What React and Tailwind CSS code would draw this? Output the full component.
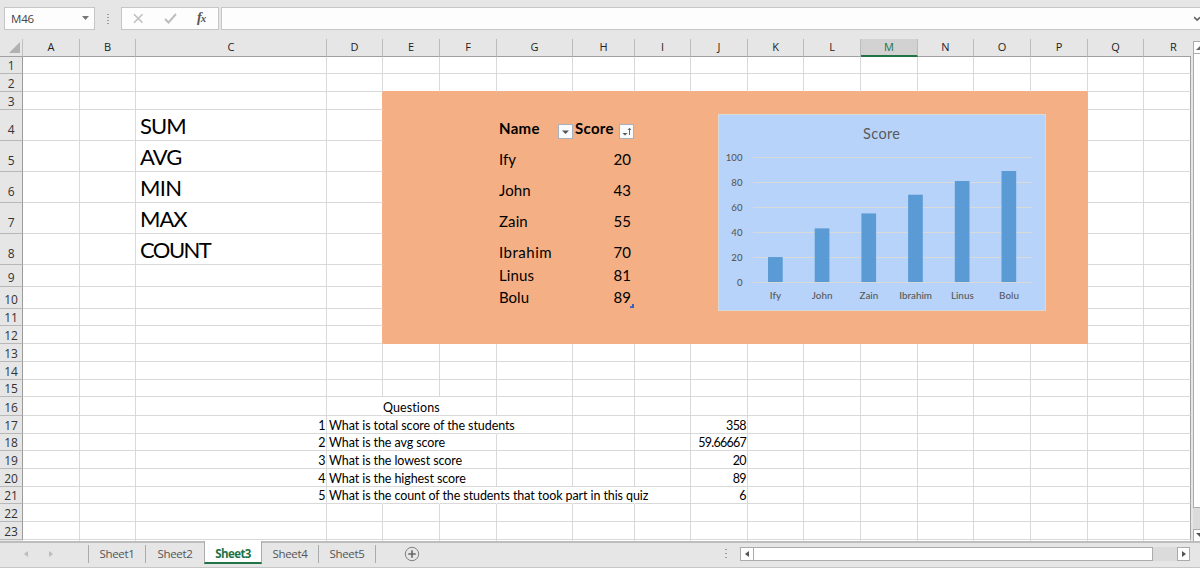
import React from "react";

const columns = [
  ["A", 57], ["B", 56], ["C", 191], ["D", 56], ["E", 57], ["F", 57], ["G", 76], ["H", 62], ["I", 56],
  ["J", 57], ["K", 56], ["L", 57], ["M", 57], ["N", 56], ["O", 57], ["P", 57], ["Q", 56], ["R", 47],
];

const rowHeights = [17, 18, 18, 31, 31, 31, 31, 31, 22, 22, 17, 18, 18, 18, 17, 19, 18, 17, 18, 18, 17, 18, 18];

const fn = "pl-[4px] text-[22px] leading-[28px]";
const name = "pl-[2px] text-[15px] leading-[20px]";
const num = "justify-end pr-[3px] text-[15px] leading-[20px]";
const q = "pl-[2px] text-[12.5px] leading-[14px] tracking-[-0.09px]";
const n = "justify-end pr-[1px] text-[12.5px] leading-[14px] tracking-[-0.6px]";

const cells = {
  C4: ["SUM", fn + " tracking-[-0.9px]"],
  C5: ["AVG", fn + " tracking-[-0.9px]"],
  C6: ["MIN", fn + " tracking-[-0.7px]"],
  C7: ["MAX", fn + " tracking-[-1px]"],
  C8: ["COUNT", fn + " tracking-[-1.55px]"],
  G4: ["Name", name + " font-bold pb-[2px] tracking-[0.3px]"],
  H4: ["Score", name + " font-bold pb-[2px] tracking-[0.3px]"],
  G5: ["Ify", name + " pb-[2px]"],
  G6: ["John", name + " pb-[2px] tracking-[0.1px]"],
  G7: ["Zain", name + " pb-[2px] tracking-[0.1px]"],
  G8: ["Ibrahim", name + " pb-[2px] tracking-[0.5px]"],
  G9: ["Linus", name + " pb-[1px] tracking-[0.1px]"],
  G10: ["Bolu", name + " pb-[1px]"],
  H5: ["20", num + " pb-[2px]"], H6: ["43", num + " pb-[2px]"], H7: ["55", num + " pb-[2px]"],
  H8: ["70", num + " pb-[2px]"], H9: ["81", num + " pb-[1px]"], H10: ["89", num + " pb-[1px]"],
  E16: ["Questions", "text-[12.5px] leading-[14px] tracking-[0.1px]"],
  C17: ["1", n], C18: ["2", n], C19: ["3", n], C20: ["4", n], C21: ["5", n],
  D17: ["What is total score of the students", q],
  D18: ["What is the avg score", q],
  D19: ["What is the lowest score", q],
  D20: ["What is the highest score", q],
  D21: ["What is the count of the students that took part in this quiz", q],
  J17: ["358", n], J18: ["59.66667", n + " tracking-[-0.75px]"], J19: ["20", n], J20: ["89", n], J21: ["6", n],
};

// Cells whose right grid line is covered by overflowing text.
const open = new Set([
  "D16", "E16", "D17", "E17", "F17", "D18", "E18", "D19", "E19", "D20", "E20",
  "D21", "E21", "F21", "G21", "H21",
]);

function FilterButton({ sorted }) {
  return (
    <span className="flex h-[15px] w-[15px] shrink-0 border border-[#a6b1bd] bg-[#f8fafc]">
      <svg width="13" height="13" viewBox="0 0 13 13">
        {sorted ? (
          <>
            <path d="M2.500 8h5L5 10.500z" fill="#555" />
            <path d="M9.500 10V3.500M8 5l1.500-1.800L11 5" stroke="#666" fill="none" strokeWidth="1" />
          </>
        ) : (
          <path d="M3 5.500h7L6.500 9z" fill="#555" />
        )}
      </svg>
    </span>
  );
}

function Cell({ col, width, row }) {
  const id = col + row;
  const c = cells[id];
  const i = col.charCodeAt(0) - 65;
  const filled = i >= 4 && i <= 15 && row >= 3 && row <= 12;
  const right = filled || (col === "D" && row >= 3 && row <= 12)
    ? "border-r-[#f4af84]"
    : open.has(id) ? "border-r-transparent" : col === "R" ? "border-r-[#a0a0a0]" : "border-r-[#d9d9d9]";
  const bottom = filled || (row === 2 && i >= 4 && i <= 15) ? "border-b-[#f4af84]" : "border-b-[#d9d9d9]";
  return (
    <div
      className={`relative flex shrink-0 items-end whitespace-nowrap border-b border-r ${right} ${bottom} ${filled ? "bg-[#f4af84]" : ""} ${c ? c[1] : ""}`}
      style={{ width }}
    >
      {c && <span>{c[0]}</span>}
      {id === "G4" && <span className="absolute -right-px bottom-px z-10"><FilterButton /></span>}
      {id === "H4" && <span className="absolute bottom-px right-0"><FilterButton sorted /></span>}
      {id === "H10" && (
        <svg className="absolute bottom-0 right-0" width="4" height="4"><path d="M4 0v4H0V2.300H2V0z" fill="#3b5fc0" /></svg>
      )}
    </div>
  );
}

const scores = [["Ify", 20], ["John", 43], ["Zain", 55], ["Ibrahim", 70], ["Linus", 81], ["Bolu", 89]];

function ScoreChart() {
  const zero = 168;
  const unit = 1.247;
  return (
    <svg className="block" width="328" height="197" viewBox="0 0 328 197" fontFamily="Lato, sans-serif" fill="#595959">
      <rect x="0.500" y="0.500" width="327" height="196" fill="#b7d3fa" stroke="#d9d9d9" />
      <text x="163.500" y="25" fontSize="14.500" textAnchor="middle" textLength="37">Score</text>
      {[0, 20, 40, 60, 80, 100].map((v) => (
        <g key={v}>
          <rect x="35" y={Math.round(zero - v * unit)} width="279" height="1" fill="#d9d9d9" />
          <text x="24.500" y={zero - v * unit + 3.500} fontSize="9.600" fontWeight="500" textAnchor="end">{v}</text>
        </g>
      ))}
      {scores.map(([label, v], i) => (
        <g key={label}>
          <rect x={50 + i * 46.700} y={zero - v * unit} width="14.700" height={v * unit} fill="#5b9bd5" />
          <text x={57.500 + i * 46.700} y="185" fontSize="9.900" fontWeight="500" textAnchor="middle">{label}</text>
        </g>
      ))}
    </svg>
  );
}

function FormulaBar() {
  return (
    <div className="flex h-[39px] shrink-0 items-start pl-[4px] pt-[7px]">
      <div className="flex h-[23px] w-[91px] items-center justify-between border border-[#c6c6c6] bg-[#fdfdfd] pl-[6px] pr-[5px] text-[11.5px] tracking-[-0.2px] text-[#444]">
        <span>M46</span>
        <svg className="-mt-[2px]" width="7" height="4"><path d="M0 0h7L3.500 4z" fill="#777" /></svg>
      </div>
      <svg className="ml-[11px] mt-[6px]" width="4" height="12">
        <path d="M1 1h2v1H1zM1 4h2v1H1zM1 7h2v1H1zM1 10h2v1H1z" fill="#a0a0a0" />
      </svg>
      <div className="ml-[11px] flex h-[23px] w-[98px] items-center border border-[#c6c6c6] bg-[#fdfdfd]">
        <svg className="ml-[11px]" width="11" height="11"><path d="M1 1.300l8.500 8.400M9.500 1.300L1 9.700" stroke="#bdbdbd" strokeWidth="1.500" /></svg>
        <svg className="ml-[20px]" width="13" height="11"><path d="M1 6l3.500 3.500L12 1" fill="none" stroke="#bdbdbd" strokeWidth="1.900" /></svg>
        <span className="-mt-[2px] ml-[20px] flex items-baseline font-['Liberation_Serif',serif] text-[14px] font-bold italic leading-none text-[#555]">f<span className="-ml-px text-[11px]">x</span></span>
      </div>
      <div className="ml-[2px] flex h-[23px] flex-1 items-center justify-end border border-r-0 border-[#c6c6c6] bg-[#fdfdfd]">
        <svg width="6" height="6"><path d="M0 1l3.200 3L6 1.300" fill="none" stroke="#666" strokeWidth="1.700" /></svg>
      </div>
    </div>
  );
}

function ColumnHeaders() {
  return (
    <div className="flex h-[18px] shrink-0 text-[11px] leading-[16px] text-[#222]">
      <div className="flex w-[23px] items-end justify-end border-b border-r border-b-[#a0a0a0] border-r-[#c0c0c0] pb-[3px] pr-[2px]">
        <svg width="11" height="11"><path d="M11 0v11H0z" fill="#b1b1b1" /></svg>
      </div>
      {columns.map(([c, w]) => (
        <div
          key={c}
          className={`shrink-0 border-b text-center ${c === "R" ? "pl-[12px]" : "border-r border-r-[#bcbcbc]"} ${c === "M" ? "border-b-2 border-b-[#217346] bg-[#d2d2d2] text-[#217346]" : "border-b-[#a0a0a0]"}`}
          style={{ width: w }}
        >
          {c}
        </div>
      ))}
    </div>
  );
}

function Sheet() {
  return (
    <div className="relative h-[484px] w-[1191px] shrink-0 overflow-hidden bg-white [font-variant-ligatures:none]">
      {rowHeights.map((h, i) => (
        <div key={i} className="flex" style={{ height: h }}>
          <div className={`flex w-[23px] shrink-0 items-end justify-center border-b border-r border-b-[#b8b8b8] border-r-[#9b9b9b] bg-[#e6e6e6] font-['Open_Sans',sans-serif] text-[12px] leading-[15px] tracking-[-0.2px] text-[#333] ${h === 31 ? "pb-[3px]" : h === 22 ? "pb-[1px]" : ""}`}>
            {i + 1}
          </div>
          {columns.map(([c, w]) => <Cell key={c} col={c} width={w} row={i + 1} />)}
        </div>
      ))}
      <div className="flex h-[2px]">
        <div className="w-[23px] shrink-0 bg-[#e6e6e6]" />
        {columns.map(([c, w]) => <div key={c} className="shrink-0 border-r border-[#d9d9d9]" style={{ width: w }} />)}
      </div>
      <div className="absolute left-[718px] top-[57px]"><ScoreChart /></div>
    </div>
  );
}

function VerticalScrollbar() {
  return (
    <div className="ml-[2px] mt-[2px] flex h-[501px] w-[7px] flex-col overflow-hidden bg-[#dbdbdb]">
      <div className="flex h-[13px] items-center border border-r-0 border-[#ababab] bg-white pl-[2px]">
        <svg width="5" height="5"><path d="M0 5l4-4 1 1v3z" fill="#666" /></svg>
      </div>
      <div className="h-[454px] border border-r-0 border-t-0 border-[#ababab] bg-white" />
      <div className="mt-auto flex h-[13px] items-center border border-r-0 border-[#ababab] bg-white pl-[2px]">
        <svg width="5" height="5"><path d="M0 0h5v3L4 4z" fill="#555" /></svg>
      </div>
    </div>
  );
}

function SheetTabs() {
  const tabs = [["Sheet1", 57], ["Sheet2", 58], ["Sheet3", 58], ["Sheet4", 57], ["Sheet5", 57]];
  return (
    <div className="flex h-[27px] shrink-0 items-start border-b border-t-2 border-b-[#c6c6c6] border-t-[#bdbdbd]">
      <div className="flex w-[88px] shrink-0 items-center gap-[21px] pl-[24px] pt-[8px]">
        <svg width="4" height="6"><path d="M4 0v6L0 3z" fill="#bcbcbc" /></svg>
        <svg width="4" height="6"><path d="M0 0v6l4-3z" fill="#bcbcbc" /></svg>
      </div>
      <div className="mt-[2px] h-[18px] w-px bg-[#ababab]" />
      {tabs.map(([t, w]) =>
        t === "Sheet3" ? (
          <div key={t} className="-mt-[2px] h-[23px] shrink-0 border-x border-b-2 border-x-[#ababab] border-b-[#217346] bg-white pt-[3px] text-center text-[11.5px] font-bold leading-[19px] tracking-[-0.55px] text-[#217346]" style={{ width: w }}>
            {t}
          </div>
        ) : (
          <div key={t} className={`mt-[2px] h-[18px] shrink-0 text-center text-[11.5px] leading-[17px] tracking-[-0.35px] text-[#555] ${t === "Sheet2" ? "" : "border-r border-[#ababab]"}`} style={{ width: w }}>
            {t}
          </div>
        )
      )}
      <svg className="ml-[28px] mt-[3px]" width="16" height="16">
        <circle cx="8" cy="8" r="6.700" fill="none" stroke="#808080" />
        <path d="M8 4.300v7.400M4.300 8h7.400" stroke="#666" strokeWidth="1.600" />
      </svg>
      <div className="flex-1" />
      <svg className="mr-[12px] mt-[5px]" width="4" height="12">
        <path d="M1 1h2v1H1zM1 5h2v1H1zM1 9h2v1H1z" fill="#999" />
      </svg>
      <div className="mr-[10px] mt-[4px] flex h-[14px] w-[450px] bg-[#dbdbdb]">
        <div className="flex w-[14px] items-center justify-center border border-[#ababab] bg-white">
          <svg width="4" height="6"><path d="M4 0v6L0 3z" fill="#555" /></svg>
        </div>
        <div className="w-[399px] border border-l-0 border-[#ababab] bg-white" />
        <div className="ml-auto flex w-[13px] items-center justify-center border border-[#ababab] bg-white">
          <svg width="4" height="6"><path d="M0 0v6l4-3z" fill="#555" /></svg>
        </div>
      </div>
    </div>
  );
}

export default function App() {
  return (
    <div className="flex h-[568px] w-[1200px] flex-col overflow-hidden bg-[#e6e6e6] font-['Open_Sans',sans-serif]">
      <FormulaBar />
      <div className="flex h-[502px] shrink-0">
        <div className="flex w-[1191px] shrink-0 flex-col">
          <ColumnHeaders />
          <div className="font-[Lato,sans-serif] text-black"><Sheet /></div>
        </div>
        <VerticalScrollbar />
      </div>
      <SheetTabs />
    </div>
  );
}
